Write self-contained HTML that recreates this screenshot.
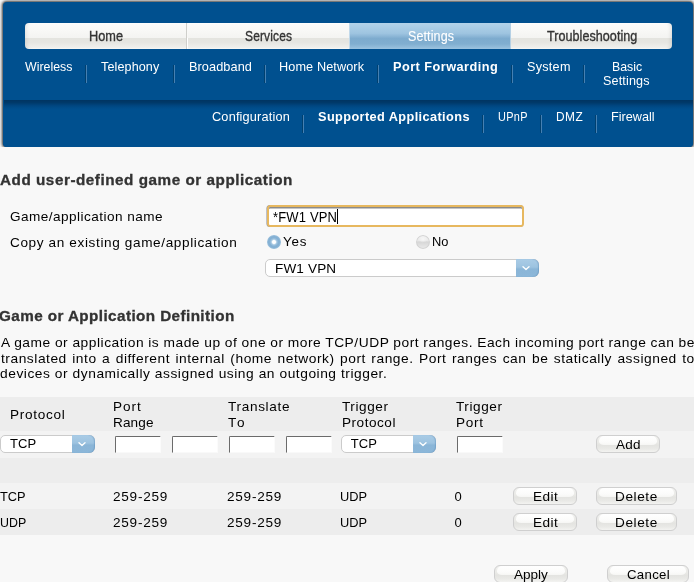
<!DOCTYPE html>
<html>
<head>
<meta charset="utf-8">
<title>Port Forwarding - Supported Applications</title>
<style>
html,body{margin:0;padding:0;}
body{width:694px;height:582px;overflow:hidden;background:#f8f8f8;font-family:"Liberation Sans",sans-serif;position:relative;}
.a{position:absolute;}
#txt{position:absolute;left:0;top:0;width:694px;height:582px;will-change:transform;}
.t{position:absolute;white-space:nowrap;line-height:1;transform-origin:0 0;display:block;}
#hdr{left:3px;top:2px;width:690.4px;height:145px;background:#00508f;border-radius:4px;box-shadow:0 0 3px .6px rgba(0,0,0,.8);}
#hdr2{left:4px;top:100px;width:689px;height:10px;background:linear-gradient(#003461 0,#003969 25%,#00457f 55%,#004d8a 80%,#00508f);}
#cover{left:0;top:147px;width:694px;height:6px;background:#f8f8f8;}
#hdrb{left:3px;top:140px;width:690.4px;height:7px;background:#00508f;border-radius:0 0 4px 4px;}
.tab{position:absolute;top:23px;height:26px;background:linear-gradient(#ffffff 0%,#fbfbfa 5%,#f8f8f6 30%,#f4f4f2 56%,#e4e4df 59%,#e6e6e2 75%,#f0f0ed 95%,#f9f9f8 100%);}
.tab.on{box-shadow:inset 1px 0 0 #c2d9ea, inset -1px 0 0 #b5d0e4;background:linear-gradient(#b3d3ea 0%,#9ec4e0 40%,#7dabce 60%,#80aed0 80%,#9cc3df 100%);}
.sep{position:absolute;width:1px;height:18px;background:#4680b2;box-shadow:-1px 0 0 #00406f;}
.row{position:absolute;left:0;width:694px;}
.inp{position:absolute;width:44.4px;height:15.6px;background:#fff;border:1px solid;border-color:#6b6b6b #fbfbfb #f9f9f9 #6b6b6b;border-radius:1.5px 0 0 0;}
.sel{position:absolute;height:16px;background:#fff;border:1px solid #cbcbcb;border-radius:5px;}
.sel i{position:absolute;right:-1px;top:-1px;bottom:-1px;width:23px;background:linear-gradient(#aacce6 0,#9dc3e0 45%,#8ab5d7 56%,#8cb7d9 100%);border-radius:0 6px 6px 0;box-shadow:inset -1px 0 1px rgba(90,140,185,.45);}
.sel svg{position:absolute;right:7.6px;top:6.2px;}
.btn{position:absolute;height:16px;border:1px solid #cfcfcf;border-radius:6px;background:linear-gradient(#f1f1ef 0%,#eaeae7 40%,#e4e4e1 58%,#e9e9e6 80%,#f3f3f1 100%);}
.btn::before{content:"";position:absolute;left:2px;right:2px;top:0;height:8.5px;border-radius:5px 5px 5px 5px / 5px 5px 3.5px 3.5px;background:linear-gradient(#ffffff,#fbfbfa 70%,#f6f6f4);}
.radio{position:absolute;width:14px;height:14px;border-radius:50%;}
</style>
</head>
<body>
<!-- header -->
<div id="hdr" class="a"></div>
<div id="hdr2" class="a"></div>
<div id="cover" class="a"></div>
<div id="hdrb" class="a"></div>

<!-- tabs -->
<div class="tab" style="left:25px;width:161px;border-radius:4px 0 0 4px;box-shadow:inset 4px 0 4px -3px rgba(0,0,0,.10);"></div>
<div class="a" style="left:186px;top:23px;width:1px;height:26px;background:#cfcfcb;"></div>
<div class="a" style="left:187px;top:23px;width:1px;height:26px;background:linear-gradient(#fafaf9 0,#f8f8f6 56%,#ffffff 59%,#ffffff 100%);z-index:2;"></div>
<div class="tab" style="left:187px;width:162px;"></div>
<div class="tab on" style="left:349px;width:162px;"></div>
<div class="tab" style="left:511px;width:161px;border-radius:0 4px 4px 0;box-shadow:inset -4px 0 4px -3px rgba(0,0,0,.12);"></div>

<!-- nav separators -->
<div class="sep" style="left:86px;top:65px;"></div>
<div class="sep" style="left:174px;top:65px;"></div>
<div class="sep" style="left:265px;top:65px;"></div>
<div class="sep" style="left:378px;top:65px;"></div>
<div class="sep" style="left:512px;top:65px;"></div>
<div class="sep" style="left:584px;top:65px;"></div>
<div class="sep" style="left:303px;top:115px;"></div>
<div class="sep" style="left:483px;top:115px;"></div>
<div class="sep" style="left:541px;top:115px;"></div>
<div class="sep" style="left:596px;top:115px;"></div>

<!-- form: name input -->
<div class="a" style="left:267px;top:205px;width:256.5px;height:22px;background:#e7b85f;border-radius:3.5px;box-shadow:-.6px 0 0 rgba(70,80,110,.55);"></div>
<div class="a" style="left:269px;top:207px;width:252.5px;height:18px;background:#fff;border-radius:1px;box-shadow:inset 0 1.5px 0 #8b8b8b;"></div>
<div class="a" style="left:337px;top:209px;width:1px;height:15px;background:#000;"></div>

<!-- radios -->
<div class="radio" style="left:267px;top:235px;background:radial-gradient(circle at 50% 50%,#fff 0,#fff 1.5px,#a5c7e1 2.8px,#86b2d5 4.2px,#82afd3 5.4px,#97bddb 6.6px,#a7c8e0 7px);"></div>
<div class="radio" style="left:416px;top:235px;background:radial-gradient(ellipse 4.5px 3.5px at 50% 30%,#f7f7f7 0,rgba(247,247,247,0) 100%),linear-gradient(#f1f1f1 0%,#ebebeb 38%,#d6d6d6 50%,#dfdfdf 70%,#ebebeb 100%);box-shadow:inset 0 0 0 1px #d3d3d3;"></div>

<!-- select FW1 VPN -->
<div class="sel" style="left:265px;top:259px;width:272px;"><i></i><svg width="8" height="5" viewBox="0 0 8 5"><path d="M1 0.8 L4 3.6 L7 0.8" fill="none" stroke="#fff" stroke-width="1.35" stroke-linecap="round" stroke-linejoin="round"/></svg></div>

<!-- table rows -->
<div class="row" style="top:397px;height:34px;background:#ededed;"></div>
<div class="row" style="top:431px;height:27px;background:#f3f3f3;"></div>
<div class="row" style="top:458px;height:25px;background:#ededed;"></div>
<div class="row" style="top:483px;height:26px;background:#f3f3f3;"></div>
<div class="row" style="top:509px;height:25.5px;background:#ededed;"></div>

<!-- table controls -->
<div class="sel" style="left:.3px;top:435px;width:92.5px;"><i></i><svg width="8" height="5" viewBox="0 0 8 5"><path d="M1 0.8 L4 3.6 L7 0.8" fill="none" stroke="#fff" stroke-width="1.35" stroke-linecap="round" stroke-linejoin="round"/></svg></div>
<div class="inp" style="left:114.55px;top:435.6px;"></div>
<div class="inp" style="left:171.55px;top:435.6px;"></div>
<div class="inp" style="left:228.55px;top:435.6px;"></div>
<div class="inp" style="left:285.55px;top:435.6px;"></div>
<div class="sel" style="left:341px;top:435px;width:93px;"><i></i><svg width="8" height="5" viewBox="0 0 8 5"><path d="M1 0.8 L4 3.6 L7 0.8" fill="none" stroke="#fff" stroke-width="1.35" stroke-linecap="round" stroke-linejoin="round"/></svg></div>
<div class="inp" style="left:456.55px;top:435.6px;"></div>

<!-- buttons -->
<div class="btn" style="left:596px;top:435px;width:62px;"></div>
<div class="btn" style="left:513px;top:487px;width:62px;"></div>
<div class="btn" style="left:596px;top:487px;width:79px;"></div>
<div class="btn" style="left:513px;top:513px;width:62px;"></div>
<div class="btn" style="left:596px;top:513px;width:79px;"></div>
<div class="btn" style="left:494px;top:565px;width:72px;"></div>
<div class="btn" style="left:607px;top:565px;width:80px;"></div>

<!-- text -->
<div id="txt">
<span class="t" style="left:88.63px;top:28.84px;font-size:14.6px;color:#333333;transform:scaleX(0.8727);-webkit-text-stroke:.35px #333;">Home</span>
<span class="t" style="left:244.96px;top:28.84px;font-size:14.6px;color:#333333;letter-spacing:0.171px;transform:scaleX(0.8210);-webkit-text-stroke:.35px #333;">Services</span>
<span class="t" style="left:407.96px;top:28.84px;font-size:14.6px;color:#ffffff;letter-spacing:0.117px;transform:scaleX(0.8582);-webkit-text-stroke:.12px #fff;">Settings</span>
<span class="t" style="left:547.30px;top:28.84px;font-size:14.6px;color:#333333;letter-spacing:0.041px;transform:scaleX(0.8625);-webkit-text-stroke:.35px #333;">Troubleshooting</span>
<span class="t" style="left:24.70px;top:60.67px;font-size:12.2px;color:#ffffff;transform:scaleX(1.0144);">Wireless</span>
<span class="t" style="left:101.20px;top:60.67px;font-size:12.2px;color:#ffffff;letter-spacing:0.110px;transform:scaleX(1.0324);">Telephony</span>
<span class="t" style="left:188.56px;top:60.67px;font-size:12.2px;color:#ffffff;letter-spacing:0.065px;transform:scaleX(1.0450);">Broadband</span>
<span class="t" style="left:279.16px;top:60.67px;font-size:12.2px;color:#ffffff;letter-spacing:0.098px;transform:scaleX(1.0410);">Home Network</span>
<span class="t" style="left:393.32px;top:60.67px;font-size:12.2px;color:#ffffff;font-weight:700;letter-spacing:0.432px;transform:scaleX(1.0450);">Port Forwarding</span>
<span class="t" style="left:526.80px;top:60.67px;font-size:12.2px;color:#ffffff;letter-spacing:0.257px;transform:scaleX(1.0351);">System</span>
<span class="t" style="left:611.59px;top:60.67px;font-size:12.2px;color:#ffffff;transform:scaleX(1.0102);">Basic</span>
<span class="t" style="left:603.08px;top:75.47px;font-size:12.2px;color:#ffffff;letter-spacing:0.136px;transform:scaleX(1.0332);">Settings</span>
<span class="t" style="left:211.62px;top:110.87px;font-size:12.2px;color:#ffffff;letter-spacing:0.167px;transform:scaleX(1.0450);">Configuration</span>
<span class="t" style="left:317.62px;top:110.87px;font-size:12.2px;color:#ffffff;font-weight:700;letter-spacing:0.379px;transform:scaleX(1.0450);">Supported Applications</span>
<span class="t" style="left:497.62px;top:110.87px;font-size:12.2px;color:#ffffff;letter-spacing:0.365px;transform:scaleX(0.8957);">UPnP</span>
<span class="t" style="left:555.53px;top:110.87px;font-size:12.2px;color:#ffffff;letter-spacing:0.467px;transform:scaleX(0.9748);">DMZ</span>
<span class="t" style="left:611.06px;top:110.87px;font-size:12.2px;color:#ffffff;transform:scaleX(1.0403);">Firewall</span>
<span class="t" style="left:0.30px;top:172.64px;font-size:14.6px;color:#333333;font-weight:700;letter-spacing:0.512px;transform:scaleX(1.0450);-webkit-text-stroke:.3px #333;">Add user-defined game or application</span>
<span class="t" style="left:-0.68px;top:308.64px;font-size:14.6px;color:#333333;font-weight:700;letter-spacing:0.399px;transform:scaleX(1.0450);-webkit-text-stroke:.3px #333;">Game or Application Definition</span>
<span class="t" style="left:10.13px;top:209.80px;font-size:13.0px;color:#000000;letter-spacing:0.437px;transform:scaleX(1.0450);">Game/application name</span>
<span class="t" style="left:10.13px;top:236.00px;font-size:13.0px;color:#000000;letter-spacing:0.595px;transform:scaleX(1.0450);">Copy an existing game/application</span>
<span class="t" style="left:283.30px;top:234.80px;font-size:13.0px;color:#000000;letter-spacing:0.814px;transform:scaleX(1.0319);">Yes</span>
<span class="t" style="left:432.01px;top:234.80px;font-size:13.0px;color:#000000;transform:scaleX(0.9878);">No</span>
<span class="t" style="left:272.62px;top:209.98px;font-size:14.2px;color:#000000;letter-spacing:0.175px;transform:scaleX(0.9161);">*FW1 VPN</span>
<span class="t" style="left:274.86px;top:262.00px;font-size:13.0px;color:#000000;letter-spacing:0.157px;transform:scaleX(1.0409);">FW1 VPN</span>
<span class="t" style="left:9.76px;top:407.80px;font-size:13.0px;color:#000000;letter-spacing:0.685px;transform:scaleX(1.0450);">Protocol</span>
<span class="t" style="left:113.25px;top:399.80px;font-size:13.0px;color:#000000;letter-spacing:0.930px;transform:scaleX(1.0450);">Port</span>
<span class="t" style="left:113.26px;top:416.00px;font-size:13.0px;color:#000000;letter-spacing:0.117px;transform:scaleX(1.0437);">Range</span>
<span class="t" style="left:228.00px;top:399.80px;font-size:13.0px;color:#000000;letter-spacing:0.648px;transform:scaleX(1.0450);">Translate</span>
<span class="t" style="left:228.00px;top:416.00px;font-size:13.0px;color:#000000;letter-spacing:2.098px;transform:scaleX(1.0450);">To</span>
<span class="t" style="left:342.00px;top:399.80px;font-size:13.0px;color:#000000;letter-spacing:0.554px;transform:scaleX(1.0450);">Trigger</span>
<span class="t" style="left:342.06px;top:416.00px;font-size:13.0px;color:#000000;letter-spacing:0.491px;transform:scaleX(1.0450);">Protocol</span>
<span class="t" style="left:456.20px;top:399.80px;font-size:13.0px;color:#000000;letter-spacing:0.554px;transform:scaleX(1.0450);">Trigger</span>
<span class="t" style="left:456.15px;top:416.00px;font-size:13.0px;color:#000000;letter-spacing:0.678px;transform:scaleX(1.0450);">Port</span>
<span class="t" style="left:10.20px;top:437.30px;font-size:13.0px;color:#000000;transform:scaleX(1.0028);">TCP</span>
<span class="t" style="left:350.81px;top:437.30px;font-size:13.0px;color:#000000;">TCP</span>
<span class="t" style="left:616.00px;top:437.70px;font-size:13.0px;color:#000000;letter-spacing:0.269px;transform:scaleX(1.0393);">Add</span>
<span class="t" style="left:0.40px;top:489.80px;font-size:13.0px;color:#000000;transform:scaleX(0.9831);">TCP</span>
<span class="t" style="left:113.14px;top:489.80px;font-size:13.0px;color:#000000;letter-spacing:0.709px;transform:scaleX(1.0450);">259-259</span>
<span class="t" style="left:227.14px;top:489.80px;font-size:13.0px;color:#000000;letter-spacing:0.709px;transform:scaleX(1.0450);">259-259</span>
<span class="t" style="left:340.21px;top:489.80px;font-size:13.0px;color:#000000;transform:scaleX(0.9854);">UDP</span>
<span class="t" style="left:454.56px;top:489.80px;font-size:13.0px;color:#000000;letter-spacing:2.800px;">0</span>
<span class="t" style="left:532.56px;top:489.80px;font-size:13.0px;color:#000000;letter-spacing:0.453px;transform:scaleX(1.0450);">Edit</span>
<span class="t" style="left:614.96px;top:489.80px;font-size:13.0px;color:#000000;letter-spacing:0.581px;transform:scaleX(1.0450);">Delete</span>
<span class="t" style="left:0.05px;top:516.00px;font-size:13.0px;color:#000000;transform:scaleX(0.9544);">UDP</span>
<span class="t" style="left:113.14px;top:516.00px;font-size:13.0px;color:#000000;letter-spacing:0.709px;transform:scaleX(1.0450);">259-259</span>
<span class="t" style="left:227.14px;top:516.00px;font-size:13.0px;color:#000000;letter-spacing:0.709px;transform:scaleX(1.0450);">259-259</span>
<span class="t" style="left:340.21px;top:516.00px;font-size:13.0px;color:#000000;transform:scaleX(0.9854);">UDP</span>
<span class="t" style="left:454.56px;top:516.00px;font-size:13.0px;color:#000000;letter-spacing:2.800px;">0</span>
<span class="t" style="left:532.56px;top:516.00px;font-size:13.0px;color:#000000;letter-spacing:0.453px;transform:scaleX(1.0450);">Edit</span>
<span class="t" style="left:614.96px;top:516.00px;font-size:13.0px;color:#000000;letter-spacing:0.581px;transform:scaleX(1.0450);">Delete</span>
<span class="t" style="left:514.00px;top:568.00px;font-size:13.0px;color:#000000;transform:scaleX(1.0418);">Apply</span>
<span class="t" style="left:626.96px;top:568.00px;font-size:13.0px;color:#000000;letter-spacing:0.303px;transform:scaleX(1.0153);">Cancel</span>
<span class="t" style="left:0.60px;top:336.00px;font-size:13.0px;color:#000;letter-spacing:0.500px;word-spacing:-0.175px;transform:scaleX(1.0600);">A game or application is made up of one or more TCP/UDP port ranges. Each incoming port range can be</span>
<span class="t" style="left:0.80px;top:352.00px;font-size:13.0px;color:#000;letter-spacing:0.500px;word-spacing:1.032px;transform:scaleX(1.0600);">translated into a different internal (home network) port range. Port ranges can be statically assigned to</span>
<span class="t" style="left:-0.04px;top:367.00px;font-size:13.0px;color:#000;letter-spacing:0.500px;word-spacing:0.054px;transform:scaleX(1.0600);">devices or dynamically assigned using an outgoing trigger.</span>
</div>
</body>
</html>
